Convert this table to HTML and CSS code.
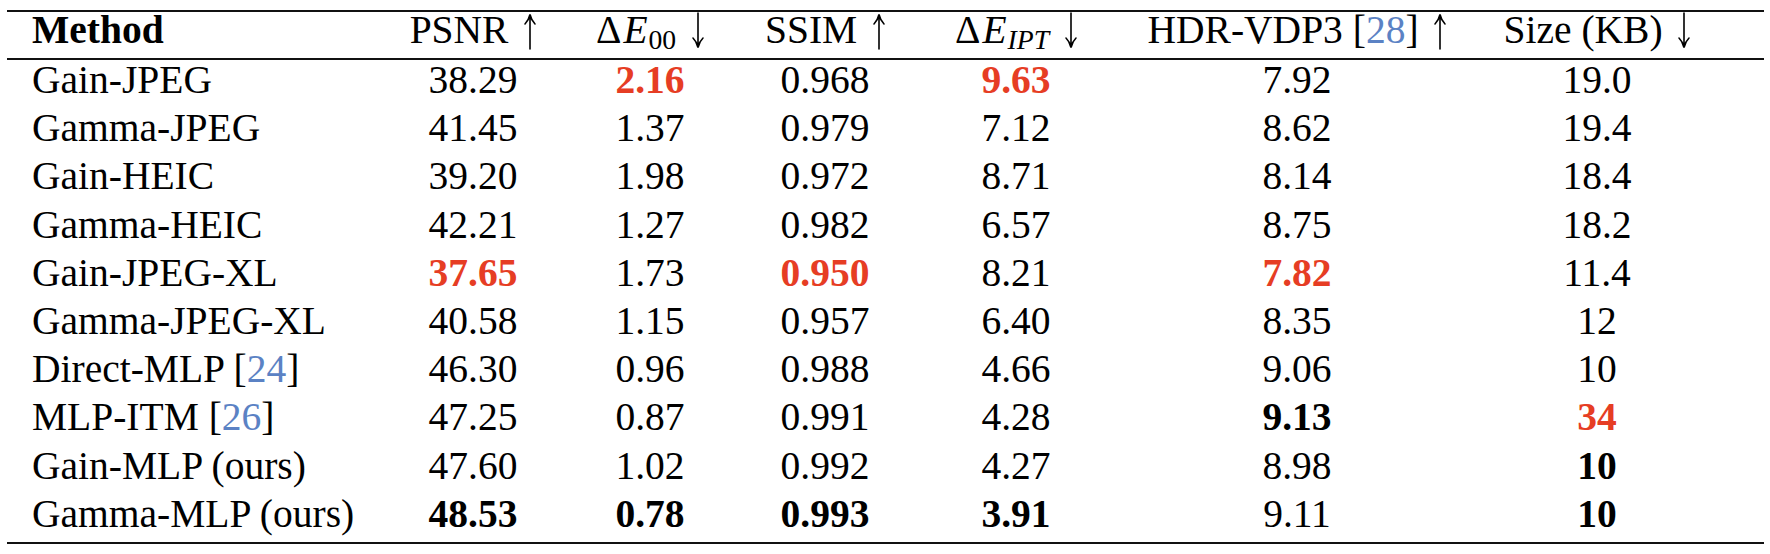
FILE: index.html
```html
<!DOCTYPE html>
<html lang="en">
<head>
<meta charset="utf-8">
<title>Comparison table</title>
<link rel="stylesheet" href="styles.css">
</head>
<body>
<table class="results">
  <colgroup>
    <col class="c-method">
    <col class="c-psnr">
    <col class="c-de">
    <col class="c-ssim">
    <col class="c-ipt">
    <col class="c-hdr">
    <col class="c-size">
  </colgroup>
  <thead>
    <tr>
      <th class="method">Method</th>
      <th>PSNR <svg class="arr" viewBox="0 0 12 36" aria-label="higher is better"><path d="M6 2 V36 M1 11 Q4.6 7.5 6 1.5 Q7.4 7.5 11 11"/></svg></th>
      <th><span class="up">Δ</span><span class="it">E</span><sub>00</sub> <svg class="arr" viewBox="0 0 12 36" aria-label="lower is better"><path d="M6 0 V34 M1 25 Q4.6 28.5 6 34.5 Q7.4 28.5 11 25"/></svg></th>
      <th>SSIM <svg class="arr" viewBox="0 0 12 36" aria-label="higher is better"><path d="M6 2 V36 M1 11 Q4.6 7.5 6 1.5 Q7.4 7.5 11 11"/></svg></th>
      <th><span class="up">Δ</span><span class="it">E</span><sub class="it">IPT</sub> <svg class="arr" viewBox="0 0 12 36" aria-label="lower is better"><path d="M6 0 V34 M1 25 Q4.6 28.5 6 34.5 Q7.4 28.5 11 25"/></svg></th>
      <th>HDR-VDP3 [<span class="cite">28</span>] <svg class="arr" viewBox="0 0 12 36" aria-label="higher is better"><path d="M6 2 V36 M1 11 Q4.6 7.5 6 1.5 Q7.4 7.5 11 11"/></svg></th>
      <th class="last">Size (KB) <svg class="arr" viewBox="0 0 12 36" aria-label="lower is better"><path d="M6 0 V34 M1 25 Q4.6 28.5 6 34.5 Q7.4 28.5 11 25"/></svg></th>
    </tr>
  </thead>
  <tbody>
    <tr><td class="method">Gain-JPEG</td><td>38.29</td><td class="worst">2.16</td><td>0.968</td><td class="worst">9.63</td><td>7.92</td><td class="last">19.0</td></tr>
    <tr><td class="method">Gamma-JPEG</td><td>41.45</td><td>1.37</td><td>0.979</td><td>7.12</td><td>8.62</td><td class="last">19.4</td></tr>
    <tr><td class="method">Gain-HEIC</td><td>39.20</td><td>1.98</td><td>0.972</td><td>8.71</td><td>8.14</td><td class="last">18.4</td></tr>
    <tr><td class="method">Gamma-HEIC</td><td>42.21</td><td>1.27</td><td>0.982</td><td>6.57</td><td>8.75</td><td class="last">18.2</td></tr>
    <tr><td class="method">Gain-JPEG-XL</td><td class="worst">37.65</td><td>1.73</td><td class="worst">0.950</td><td>8.21</td><td class="worst">7.82</td><td class="last">11.4</td></tr>
    <tr><td class="method">Gamma-JPEG-XL</td><td>40.58</td><td>1.15</td><td>0.957</td><td>6.40</td><td>8.35</td><td class="last">12</td></tr>
    <tr><td class="method">Direct-MLP [<span class="cite">24</span>]</td><td>46.30</td><td>0.96</td><td>0.988</td><td>4.66</td><td>9.06</td><td class="last">10</td></tr>
    <tr><td class="method">MLP-ITM [<span class="cite">26</span>]</td><td>47.25</td><td>0.87</td><td>0.991</td><td>4.28</td><td class="best">9.13</td><td class="last worst">34</td></tr>
    <tr><td class="method">Gain-MLP (ours)</td><td>47.60</td><td>1.02</td><td>0.992</td><td>4.27</td><td>8.98</td><td class="last best">10</td></tr>
    <tr><td class="method">Gamma-MLP (ours)</td><td class="best">48.53</td><td class="best">0.78</td><td class="best">0.993</td><td class="best">3.91</td><td>9.11</td><td class="last best">10</td></tr>
  </tbody>
</table>
</body>
</html>
```

FILE: styles.css
```css
html, body {
  margin: 0;
  padding: 0;
  background: #ffffff;
}

body {
  font-family: "Liberation Serif", "Times New Roman", serif;
  color: #000000;
}

.results {
  margin: 10px 0 0 7px;
  width: 1757px;
  table-layout: fixed;
  border-collapse: collapse;
  border-top: 2px solid #111111;
  border-bottom: 2px solid #111111;
  font-size: 39.5px;
}

.c-method { width: 383px; }
.c-psnr { width: 166px; }
.c-de { width: 188px; }
.c-ssim { width: 162px; }
.c-ipt { width: 220px; }
.c-hdr { width: 342px; }
.c-size { width: 296px; }

.results th,
.results td {
  text-align: center;
  white-space: nowrap;
  vertical-align: top;
}

.results thead tr {
  border-bottom: 2px solid #111111;
}

.results th {
  font-weight: normal;
  height: 46px;
  line-height: 37px;
  padding: 0 0 9px 0;
  box-sizing: border-box;
}

.results td {
  height: 48.2px;
  line-height: 41px;
  padding: 0 0 7.2px 0;
  box-sizing: border-box;
}

.results .method {
  text-align: left;
  padding-left: 25px;
}

.results th.method {
  font-weight: bold;
}

.results .last {
  padding-right: 38px;
}

.it {
  font-style: italic;
}

.up {
  font-style: normal;
  margin-right: 2px;
}

.results sub {
  font-size: 0.7em;
  line-height: 0;
  vertical-align: -0.2em;
  margin-left: 1px;
}

.arr {
  width: 12px;
  height: 36px;
  margin-left: 6px;
  vertical-align: -6px;
  fill: none;
  stroke: #000000;
  stroke-width: 1.6;
  stroke-linecap: round;
  overflow: visible;
}

.cite {
  color: #5b82c4;
}

.best {
  font-weight: bold;
}

.worst {
  font-weight: bold;
  color: #e63d24;
}
```
